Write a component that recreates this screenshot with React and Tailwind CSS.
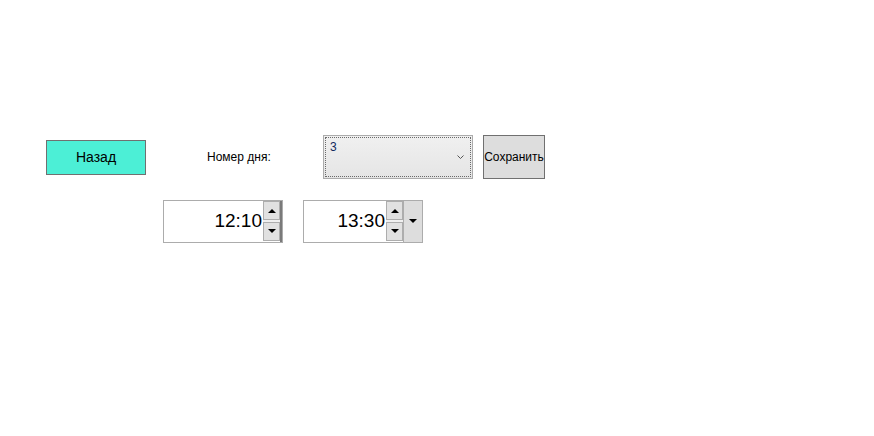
import React from 'react';

const Arrow = ({ up }) => (
  <svg width="8" height="5" viewBox="0 0 8 5" className="block">
    {up ? <path d="M0 5 L4 1 L8 5 Z" fill="#000" /> : <path d="M0 0 L4 4 L8 0 Z" fill="#000" />}
  </svg>
);

const Spinner = () => (
  <div className="flex h-full w-[17px] flex-col gap-[2px] bg-[#f0f0f0]">
    <div className="flex flex-1 items-center justify-center border border-[#adadad] bg-[#e1e1e1]">
      <Arrow up />
    </div>
    <div className="flex flex-1 items-center justify-center border border-[#adadad] bg-[#e1e1e1]">
      <Arrow />
    </div>
  </div>
);

const TimeBox = ({ value, dropdown }) => (
  <div className="flex h-[43px] w-[120px] border border-[#acacac] bg-white">
    <div className="flex flex-1 items-center justify-end pr-[1px] text-[19px] text-black">{value}</div>
    <div className="pb-[1px]">
      <Spinner />
    </div>
    {dropdown ? (
      <div className="flex w-[19px] items-center justify-center border-l border-[#adadad] bg-[#dddddd]">
        <Arrow />
      </div>
    ) : (
      <div className="w-[2px] bg-[#7a7a7a]" />
    )}
  </div>
);

export default function App() {
  return (
    <div className="h-[436px] w-[874px] bg-white pt-[135px] font-['Liberation_Sans',Arial,sans-serif]">
      <div className="flex items-center pl-[46px]">
        <button className="h-[35px] w-[100px] border border-[#707070] bg-[#4cefd6] text-[14px] text-black">
          Назад
        </button>
        <div className="ml-[61px] w-[116px] text-[12px] text-black">Номер дня:</div>
        <div className="h-[44px] w-[150px] border border-[#acacac] bg-gradient-to-b from-[#f0f0f0] to-[#e5e5e5] p-[1px]">
          <div className="relative h-full w-full border border-dotted border-[#6a6a6a]">
            <span className="absolute left-[4px] top-0 text-[12px] text-[#102a5e]">3</span>
            <svg width="7" height="4" viewBox="0 0 7 4" className="absolute right-[6px] top-[17px]">
              <path d="M0.5 0.5 L3.5 3.5 L6.5 0.5" fill="none" stroke="#555" strokeWidth="1" />
            </svg>
          </div>
        </div>
        <button className="ml-[10px] h-[44px] w-[62px] border border-[#707070] bg-[#dddddd] px-0 text-[12px] text-black">
          Сохранить
        </button>
      </div>
      <div className="mt-[21px] flex gap-[20px] pl-[163px]">
        <TimeBox value="12:10" />
        <TimeBox value="13:30" dropdown />
      </div>
    </div>
  );
}
